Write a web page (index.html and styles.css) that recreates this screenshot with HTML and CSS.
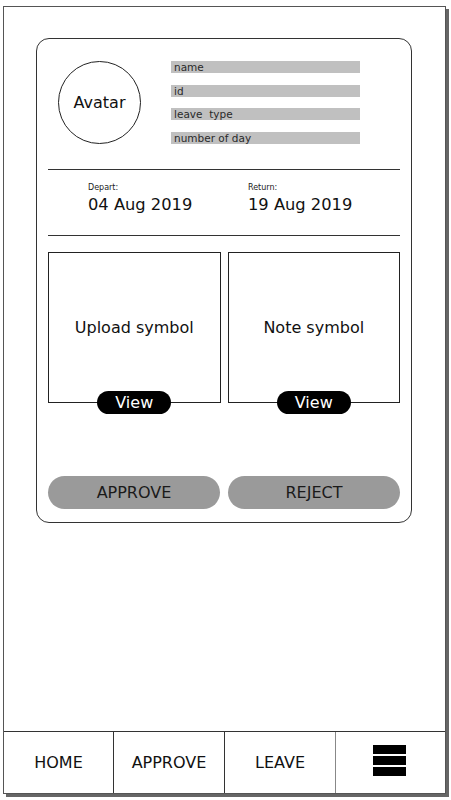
FILE: index.html
```html
<!DOCTYPE html>
<html>
<head>
<meta charset="utf-8">
<link rel="stylesheet" href="styles.css">
</head>
<body>
<div class="frame">
  <div class="card">
    <div class="header">
      <div class="avatar">Avatar</div>
      <div class="fields">
        <div class="field">name</div>
        <div class="field">id</div>
        <div class="field">leave&nbsp; type</div>
        <div class="field">number of day</div>
      </div>
    </div>
    <div class="rule"></div>
    <div class="dates">
      <div class="date-col">
        <div class="date-label">Depart:</div>
        <div class="date-value">04 Aug 2019</div>
      </div>
      <div class="date-col">
        <div class="date-label">Return:</div>
        <div class="date-value">19 Aug 2019</div>
      </div>
    </div>
    <div class="rule"></div>
    <div class="boxes">
      <div class="box">
        <span class="box-text">Upload symbol</span>
        <span class="pill">View</span>
      </div>
      <div class="box">
        <span class="box-text">Note symbol</span>
        <span class="pill">View</span>
      </div>
    </div>
    <div class="actions">
      <div class="btn">APPROVE</div>
      <div class="btn">REJECT</div>
    </div>
  </div>
  <div class="nav">
    <div class="nav-item">HOME</div>
    <div class="nav-item">APPROVE</div>
    <div class="nav-item">LEAVE</div>
    <div class="nav-item nav-light">
      <div class="burger">
        <span></span><span></span><span></span>
      </div>
    </div>
  </div>
</div>
</body>
</html>
```

FILE: styles.css
```css
* { box-sizing: border-box; }
html, body { margin: 0; padding: 0; background: #fff; }
body {
  font-family: "DejaVu Sans", Verdana, sans-serif;
  color: #111;
  width: 451px;
  height: 800px;
  padding: 6px 0 0 3px;
}
.frame {
  width: 443px;
  height: 788px;
  border: 1px solid #555;
  box-shadow: 3px 3px 0 #666;
  display: flex;
  flex-direction: column;
}
.card {
  margin: 31px 33px 0 32px;
  height: 485px;
  border: 1px solid #333;
  border-radius: 13px;
  padding: 22px 11px 11px 11px;
  display: flex;
  flex-direction: column;
}
.header {
  display: flex;
  padding-left: 10px;
  gap: 30px;
  height: 83px;
}
.avatar {
  width: 83px;
  height: 83px;
  border: 1px solid #222;
  border-radius: 50%;
  display: flex;
  align-items: center;
  justify-content: center;
  font-size: 16px;
  color: #111;
}
.fields {
  width: 189px;
  height: 83px;
  display: flex;
  flex-direction: column;
  justify-content: space-between;
}
.field {
  height: 12px;
  background: #c0c0c0;
  font-size: 10.5px;
  line-height: 12px;
  padding-left: 3px;
  color: #2a2a2a;
  white-space: pre;
}
.rule {
  height: 1px;
  background: #333;
  margin-top: 25px;
}
.dates + .rule { margin-top: 0; }
.dates {
  display: flex;
  padding: 13px 0 21px 40px;
  height: 65px;
}
.date-col { width: 160px; flex-shrink: 0; }
.date-col + .date-col { width: auto; flex: 1; }
.date-label {
  font-size: 8px;
  line-height: 10px;
  height: 10px;
  color: #222;
  margin-bottom: 2px;
}
.date-value {
  font-size: 16.3px;
  line-height: 19px;
  color: #111;
}
.boxes {
  display: flex;
  gap: 7px;
  margin-top: 16px;
}
.box {
  position: relative;
  width: 173px;
  height: 151px;
  border: 1px solid #222;
  display: flex;
  align-items: center;
  justify-content: center;
}
.box-text { font-size: 16px; color: #111; }
.pill {
  position: absolute;
  left: 50%;
  bottom: -12px;
  transform: translateX(-50%);
  width: 74px;
  height: 23px;
  border-radius: 12px;
  background: #000;
  color: #fff;
  font-size: 16px;
  line-height: 23px;
  text-align: center;
}
.actions {
  display: flex;
  gap: 8px;
  margin-top: 73px;
}
.btn {
  flex: 1;
  height: 33px;
  border-radius: 17px;
  background: #9a9a9a;
  color: #1a1a1a;
  font-size: 16px;
  display: flex;
  align-items: center;
  justify-content: center;
}
.nav {
  margin-top: auto;
  height: 62px;
  border-top: 1px solid #333;
  display: grid;
  grid-template-columns: 109px 111px 111px 1fr;
}
.nav-item {
  display: flex;
  align-items: center;
  justify-content: center;
  font-size: 16px;
  color: #111;
}
.nav-item + .nav-item { border-left: 1px solid #333; }
.nav-item.nav-light { border-left-color: #888; }
.burger {
  display: flex;
  flex-direction: column;
  gap: 2px;
  margin-top: -4px;
  margin-right: 3px;
}
.burger span {
  display: block;
  width: 33px;
  height: 9px;
  background: #000;
}
```
